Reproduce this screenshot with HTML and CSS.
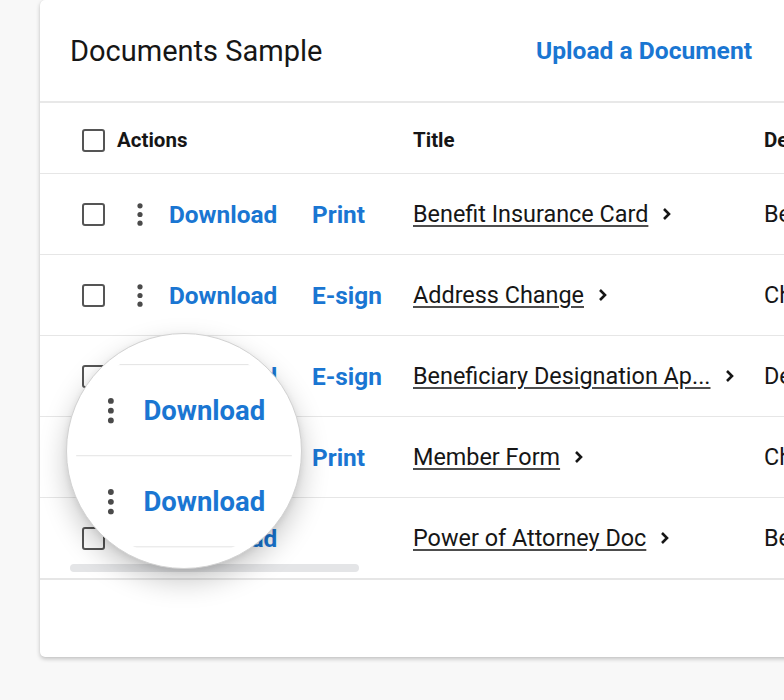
FILE: index.html
```html
<!DOCTYPE html>
<html lang="en">
<head>
<meta charset="utf-8">
<title>Documents Sample</title>
<link rel="stylesheet" href="styles.css">
</head>
<body>
<div class="card">
  <header class="card-head">
    <h1 class="card-title">Documents Sample</h1>
    <a class="upload" href="#">Upload a Document</a>
  </header>
  <div class="table">
    <div class="row row-head">
      <div class="c-actions"><span class="cb"></span><span class="th th-actions">Actions</span></div>
      <div class="c-title th">Title</div>
      <div class="c-desc th">Description</div>
    </div>
    <div class="row">
      <div class="c-actions"><span class="cb"></span><svg class="kebab" viewBox="0 0 6 23"><circle cx="3" cy="2.8" r="2.6"/><circle cx="3" cy="11.5" r="2.6"/><circle cx="3" cy="20.2" r="2.6"/></svg><a class="act act-1" href="#">Download</a><a class="act" href="#">Print</a></div>
      <div class="c-title"><a class="doc" href="#">Benefit Insurance Card</a><svg class="chev" viewBox="0 0 10 14"><polyline points="2.5,2 7.5,7 2.5,12"/></svg></div>
      <div class="c-desc">Benefit card for members</div>
    </div>
    <div class="row">
      <div class="c-actions"><span class="cb"></span><svg class="kebab" viewBox="0 0 6 23"><circle cx="3" cy="2.8" r="2.6"/><circle cx="3" cy="11.5" r="2.6"/><circle cx="3" cy="20.2" r="2.6"/></svg><a class="act act-1" href="#">Download</a><a class="act" href="#">E-sign</a></div>
      <div class="c-title"><a class="doc" href="#">Address Change</a><svg class="chev" viewBox="0 0 10 14"><polyline points="2.5,2 7.5,7 2.5,12"/></svg></div>
      <div class="c-desc">Change of address form</div>
    </div>
    <div class="row">
      <div class="c-actions"><span class="cb"></span><svg class="kebab" viewBox="0 0 6 23"><circle cx="3" cy="2.8" r="2.6"/><circle cx="3" cy="11.5" r="2.6"/><circle cx="3" cy="20.2" r="2.6"/></svg><a class="act act-1" href="#">Download</a><a class="act" href="#">E-sign</a></div>
      <div class="c-title"><a class="doc" href="#">Beneficiary Designation Ap...</a><svg class="chev" viewBox="0 0 10 14"><polyline points="2.5,2 7.5,7 2.5,12"/></svg></div>
      <div class="c-desc">Designate beneficiaries</div>
    </div>
    <div class="row">
      <div class="c-actions"><span class="cb"></span><svg class="kebab" viewBox="0 0 6 23"><circle cx="3" cy="2.8" r="2.6"/><circle cx="3" cy="11.5" r="2.6"/><circle cx="3" cy="20.2" r="2.6"/></svg><a class="act act-1" href="#">Download</a><a class="act" href="#">Print</a></div>
      <div class="c-title"><a class="doc" href="#">Member Form</a><svg class="chev" viewBox="0 0 10 14"><polyline points="2.5,2 7.5,7 2.5,12"/></svg></div>
      <div class="c-desc">Change member details</div>
    </div>
    <div class="row row-last">
      <div class="c-actions"><span class="cb"></span><svg class="kebab" viewBox="0 0 6 23"><circle cx="3" cy="2.8" r="2.6"/><circle cx="3" cy="11.5" r="2.6"/><circle cx="3" cy="20.2" r="2.6"/></svg><a class="act act-1" href="#">Download</a></div>
      <div class="c-title"><a class="doc" href="#">Power of Attorney Doc</a><svg class="chev" viewBox="0 0 10 14"><polyline points="2.5,2 7.5,7 2.5,12"/></svg></div>
      <div class="c-desc">Becomes effective</div>
    </div>
  </div>
  <div class="scrollbar"></div>
  <div class="magnifier">
    <div class="mag-inner">
      <div class="mag-content">
        <div class="mag-row"><svg class="kebab" viewBox="0 0 6 23"><circle cx="3" cy="2.8" r="2.6"/><circle cx="3" cy="11.5" r="2.6"/><circle cx="3" cy="20.2" r="2.6"/></svg><a class="act" href="#">Download</a></div>
        <div class="mag-row"><svg class="kebab" viewBox="0 0 6 23"><circle cx="3" cy="2.8" r="2.6"/><circle cx="3" cy="11.5" r="2.6"/><circle cx="3" cy="20.2" r="2.6"/></svg><a class="act" href="#">Download</a></div>
        <div class="mag-row"></div>
      </div>
    </div>
  </div>
</div>
</body>
</html>
```
FILE: styles.css
```css
* { box-sizing: border-box; }
html, body { margin: 0; padding: 0; }
body {
  background: #f8f8f8;
  font-family: Roboto, "Liberation Sans", Arial, sans-serif;
  color: #1c1c1c;
  width: 784px;
  height: 700px;
  overflow: hidden;
}
a { text-decoration: none; }

.card {
  position: relative;
  margin-left: 40px;
  width: 820px;
  height: 657px;
  background: #fff;
  border-radius: 5px;
  box-shadow: 0 2px 4px rgba(0,0,0,0.22), 0 0 1px rgba(0,0,0,0.1);
}

.card-head {
  height: 103px;
  display: flex;
  align-items: center;
  justify-content: space-between;
  padding: 0 108px 0 30px;
  border-bottom: 2px solid #e8e8e8;
}
.card-title {
  margin: 0;
  font-size: 29px;
  font-weight: 400;
  color: #161616;
}
.upload {
  font-size: 24.6px;
  font-weight: 700;
  color: #1a76d2;
}

.row {
  display: flex;
  align-items: center;
  height: 81px;
  padding-left: 42px;
  border-bottom: 1px solid #e6e6e6;
  font-size: 23.4px;
  color: #161616;
}
.row-head { height: 71px; padding-top: 4px; }
.row-last { height: 82px; border-bottom-width: 2px; }

.c-actions {
  width: 331px;
  flex: none;
  display: flex;
  align-items: center;
}
.c-title {
  width: 351px;
  flex: none;
  display: flex;
  align-items: center;
}
.c-desc { white-space: nowrap; }

.th { font-size: 20.5px; font-weight: 700; color: #161616; }
.th-actions { margin-left: 12px; }

.cb {
  width: 23px;
  height: 23px;
  flex: none;
  border: 2.5px solid #555;
  border-radius: 3px;
  background: #fff;
}

.kebab {
  width: 6px;
  height: 23px;
  flex: none;
  fill: #4a4a4a;
}
.c-actions .kebab { margin-left: 32px; margin-right: 26px; }

.act {
  font-size: 24.4px;
  font-weight: 700;
  color: #1a76d2;
}
.act-1 { width: 143px; flex: none; }

.doc {
  color: #161616;
  text-decoration: underline;
  text-decoration-thickness: 1.6px;
  text-underline-offset: 3px;
  text-decoration-color: #4d4d4d;
}
.chev {
  width: 11px;
  height: 14px;
  margin-left: 13px;
  fill: none;
  stroke: #161616;
  stroke-width: 2.6;
}

.scrollbar {
  position: absolute;
  left: 30px;
  top: 564px;
  width: 289px;
  height: 8px;
  border-radius: 4px;
  background: #e4e5e7;
}

.magnifier {
  position: absolute;
  left: 26px;
  top: 333px;
  width: 236px;
  height: 236px;
  border-radius: 50%;
  background: #fff;
  border: 1px solid #d2d2d2;
  box-shadow: 0 12px 28px rgba(0,0,0,0.22), 0 2px 6px rgba(0,0,0,0.08);
}
.mag-inner {
  position: absolute;
  inset: 9px;
  border-radius: 50%;
  overflow: hidden;
  background: #fff;
}
.mag-content {
  position: absolute;
  left: 0;
  top: 21px;
  width: 200px;
  transform: scale(1.125);
  transform-origin: 0 0;
}
.mag-row {
  display: flex;
  align-items: center;
  height: 81px;
  padding-left: 28px;
  border-top: 1px solid #e6e6e6;
}
.mag-row .kebab { margin-right: 26px; }
```
